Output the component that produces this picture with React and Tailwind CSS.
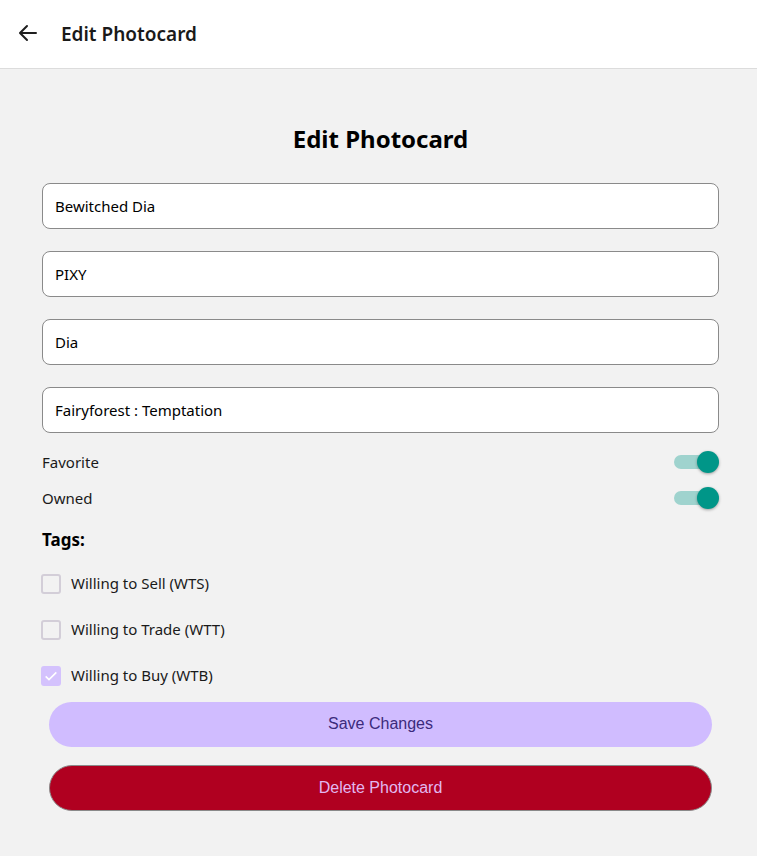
import { useState } from "react";

const font = { fontFamily: '"Segoe UI", "Noto Sans", "Open Sans", sans-serif' };

const Field = ({ value }) => (
  <input
    defaultValue={value}
    className="w-full h-[46px] px-3 rounded-lg border border-[#8a8a8a] bg-white text-[15px] text-black outline-none"
  />
);

const Toggle = ({ label, on, onClick }) => (
  <div className="flex items-center justify-between h-9">
    <span className="text-[15px] text-[#1a1a1a]">{label}</span>
    <button onClick={onClick} className="relative w-[46px] h-[24px] mr-[-1px]">
      <span className={`absolute left-0 top-[5px] w-[34px] h-[14px] rounded-full ${on ? "bg-[#9fd3ce]" : "bg-gray-400"}`} />
      <span
        className={`absolute top-[1px] w-[22px] h-[22px] rounded-full shadow-[0_1px_3px_rgba(0,0,0,0.35)] ${on ? "left-[23px] bg-[#009688]" : "left-0 bg-white"}`}
      />
    </button>
  </div>
);

const Check = ({ label, checked, onClick }) => (
  <label className="flex items-center h-[46px] cursor-pointer" onClick={onClick}>
    <span
      className={`w-[20px] h-[20px] ml-[-1px] rounded-[3px] flex items-center justify-center ${
        checked ? "bg-[#d4c2fd]" : "border-2 border-[#d3ced8]"
      }`}
    >
      {checked && (
        <svg viewBox="0 0 24 24" className="w-[16px] h-[16px]" fill="none" stroke="white" strokeWidth={2.4}>
          <path d="M4 12.5l5 5L20 6.5" />
        </svg>
      )}
    </span>
    <span className="ml-[10px] text-[15px] text-[#1a1a1a]">{label}</span>
  </label>
);

export default function App() {
  const [fav, setFav] = useState(true);
  const [owned, setOwned] = useState(true);
  const [tags, setTags] = useState({ wts: false, wtt: false, wtb: true });

  return (
    <div className="min-h-[856px] bg-[#f2f2f2]" style={font}>
      {/* Top bar */}
      <div className="h-[69px] bg-white border-b border-[#dcdcdc] flex items-center px-4">
        <svg viewBox="0 0 24 24" className="w-[24px] h-[24px] mt-[-2px]" fill="none" stroke="#1f1f1f" strokeWidth={2} strokeLinecap="round" strokeLinejoin="round">
          <path d="M20 12H5M11 5l-7 7 7 7" />
        </svg>
        <h1 className="ml-[21px] text-[19px] font-semibold text-[#1a1a1a]">Edit Photocard</h1>
      </div>

      <div className="px-[42px] pr-[38px]">
        <h2 className="pt-[53px] text-center text-[24px] font-bold text-black leading-[34px]">Edit Photocard</h2>

        <div className="mt-[27px] flex flex-col gap-[22px]">
          <Field value="Bewitched Dia" />
          <Field value="PIXY" />
          <Field value="Dia" />
          <Field value="Fairyforest : Temptation" />
        </div>

        <div className="mt-[11px]">
          <Toggle label="Favorite" on={fav} onClick={() => setFav(!fav)} />
          <Toggle label="Owned" on={owned} onClick={() => setOwned(!owned)} />
        </div>

        <h3 className="mt-[11px] text-[17px] font-bold text-black">Tags:</h3>

        <div className="mt-[8px]">
          <Check label="Willing to Sell (WTS)" checked={tags.wts} onClick={() => setTags({ ...tags, wts: !tags.wts })} />
          <Check label="Willing to Trade (WTT)" checked={tags.wtt} onClick={() => setTags({ ...tags, wtt: !tags.wtt })} />
          <Check label="Willing to Buy (WTB)" checked={tags.wtb} onClick={() => setTags({ ...tags, wtb: !tags.wtb })} />
        </div>

        <div className="mx-[7px] mt-[3px] flex flex-col gap-[18px]" style={{ fontFamily: '"Liberation Sans", Arial, sans-serif' }}>
          <button className="h-[45px] rounded-full bg-[#d0bcff] text-[#3c2b7c] text-[16px]">Save Changes</button>
          <button className="h-[46px] rounded-full bg-[#b00020] border border-[#8a8a8a] text-[#e2b8f0] text-[16px]">Delete Photocard</button>
        </div>
      </div>
    </div>
  );
}
